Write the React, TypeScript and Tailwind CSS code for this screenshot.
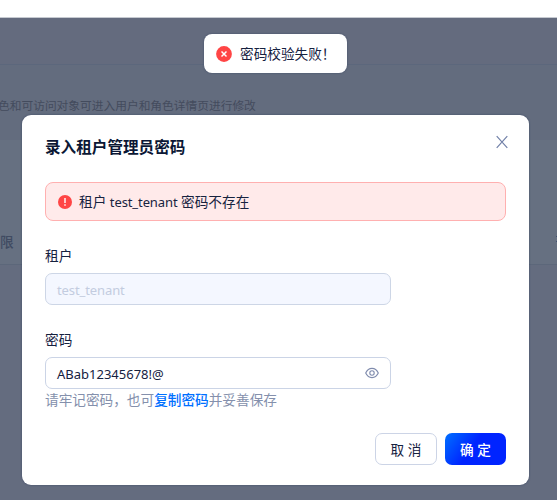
function PageBehind() {
  return (
    <div className="flex h-[500px] flex-col overflow-hidden">
      <header className="h-[18px] shrink-0 border-b border-[#c6cad1] bg-white" />
      <div className="h-[47px] shrink-0 border-b border-[#5c677c] bg-[#646b7e]" />
      <div className="h-[75px] shrink-0 bg-[#636c7e] pt-[32px]">
        <p className="-ml-[2px] whitespace-nowrap text-[11.73px] leading-[17px] text-[#434b5d]">
          色和可访问对象可进入用户和角色详情页进行修改
        </p>
      </div>
      <div className="flex h-[125px] shrink-0 items-end justify-between border-b border-[#5c677a] bg-[#667081] pb-[12px]">
        <span className="text-[13.65px] font-medium leading-[20px] text-[#404b62]">限</span>
        <span className="mb-[10px] h-[6px] w-px border-y border-[#405070]" />
      </div>
      <div className="grow bg-[#646c7f]" />
    </div>
  );
}

function Toast() {
  return (
    <div className="absolute left-[204px] top-[33.5px] flex h-[39.5px] w-[143px] items-center rounded-lg bg-white pl-[12px] shadow-[0_0_2px_rgba(30,45,80,0.5)]">
      <svg className="mt-[2px] size-4 shrink-0" viewBox="0 0 16 16">
        <circle cx="8" cy="8" r="7.9" fill="#ff4545" />
        <path d="M5.5 5.4l5 5.2M10.5 5.4l-5 5.2" stroke="#fff" strokeWidth="1.4" />
      </svg>
      <span className="ml-[8px] mt-[2px] whitespace-nowrap text-[13.65px] leading-5 text-[#15213f]">密码校验失败！</span>
    </div>
  );
}

function Alert() {
  return (
    <div className="mt-[23px] flex h-[39px] items-center rounded-lg border border-[#ffb0b0] bg-[#ffeaea] pl-[12px]">
      <svg className="size-[14px] shrink-0" viewBox="0 0 14 14">
        <circle cx="7" cy="7" r="7" fill="#ff4545" />
        <path d="M7 3.1v4.8M7 9.2v1.6" stroke="#fff" strokeWidth="1.4" />
      </svg>
      <span className="ml-[7px] whitespace-nowrap text-[13.65px] leading-5 text-[#17233f]">
        租户 <span className="text-[13px] tracking-[-0.1px]">test_tenant</span> 密码不存在
      </span>
    </div>
  );
}

function EyeIcon() {
  return (
    <svg className="h-[12px] w-[14px]" viewBox="0 0 14 12" fill="none" stroke="#7f8bad" strokeWidth="1.1">
      <path d="M.7 6C2.1 3 4.2 1.4 7 1.4S11.9 3 13.3 6C11.9 9 9.8 10.6 7 10.6S2.1 9 .7 6Z" />
      <circle cx="7" cy="6" r="2.2" />
    </svg>
  );
}

function Modal() {
  return (
    <section className="absolute left-[22px] top-[115px] flex h-[370px] w-[507px] flex-col rounded-[9px] bg-white px-[23px] pt-[21px] text-[13.65px] leading-5 text-[#15213f] shadow-[0_0_2px_rgba(30,45,80,0.6)]">
      <div className="flex h-[23px] items-center justify-between">
        <h1 className="text-[15.6px] font-bold leading-[23px] text-[#0b1735]">录入租户管理员密码</h1>
        <svg className="mr-[-3px] mt-[-11px] size-[14px]" viewBox="0 0 14 14" fill="none" stroke="#7180a8" strokeWidth="1.2">
          <path d="M1.7 1.2L12.3 12.8M12.3 1.2L1.7 12.8" />
        </svg>
      </div>
      <Alert />
      <label className="mt-[25px]">租户</label>
      <div className="mt-[7px] flex h-[32px] w-[346px] items-center rounded-[7px] border border-[#cdd6e6] bg-[#f4f7ff] px-[11px] pt-px text-[13px] tracking-[-0.1px] text-[#c3cce0]">
        test_tenant
      </div>
      <label className="mt-[25px]">密码</label>
      <div className="mt-[7px] flex h-[32px] w-[346px] items-center justify-between rounded-[7px] border border-[#cbd4e6] px-[11px]">
        <span className="mt-px text-[13px]">ABab12345678!@</span>
        <EyeIcon />
      </div>
      <p className="mt-px whitespace-nowrap text-[#8490ac]">
        请牢记密码，也可<a className="font-medium text-[#0070ff]">复制密码</a>并妥善保存
      </p>
      <div className="mt-[23px] flex justify-end gap-2">
        <button className="h-[32px] w-[62px] rounded-[7px] border border-[#ccd4e6] bg-white pt-px text-center">取 消</button>
        <button className="h-[32px] w-[61px] rounded-[7px] bg-[linear-gradient(125deg,#0070ff_0%,#0024ff_45%,#0024ff_100%)] pt-px text-center font-medium text-white">
          确 定
        </button>
      </div>
    </section>
  );
}

export default function App() {
  return (
    <main className="relative h-[500px] w-full overflow-hidden font-['Noto_Sans','Noto_Sans_CJK_SC',sans-serif]">
      <PageBehind />
      <Modal />
      <Toast />
    </main>
  );
}
